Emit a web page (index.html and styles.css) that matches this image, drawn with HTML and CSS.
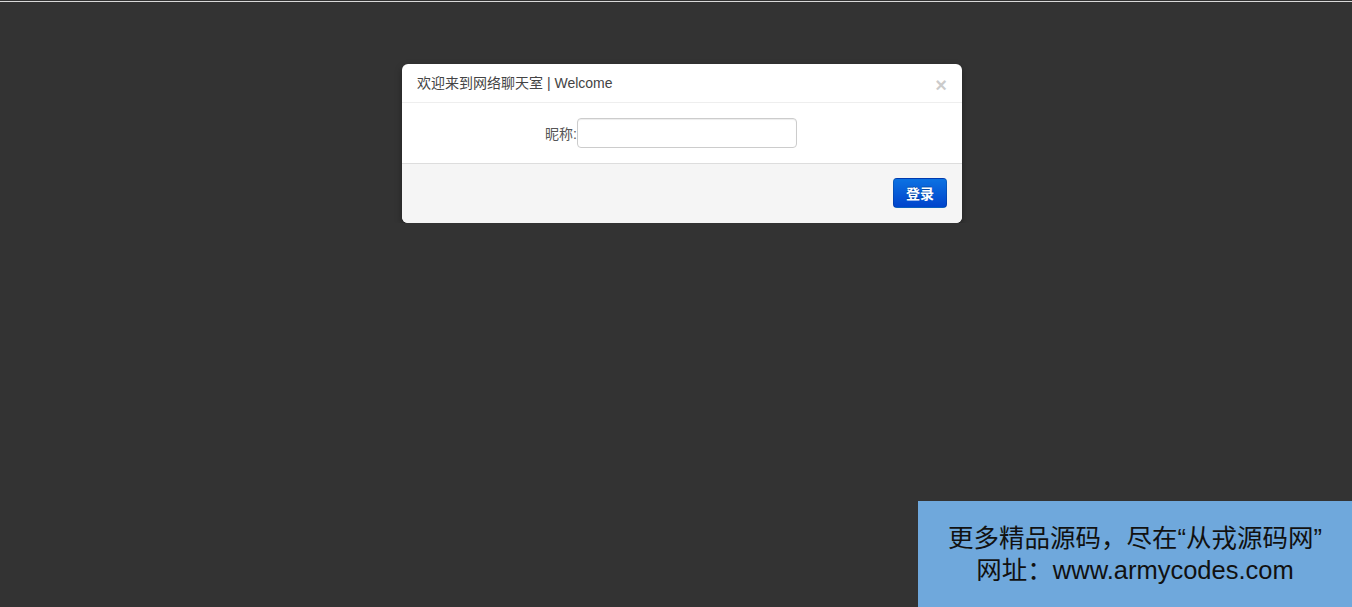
FILE: index.html
```html
<!DOCTYPE html>
<html lang="zh-CN">
  <head>
    <meta charset="UTF-8" />
    <meta name="viewport" content="width=device-width, initial-scale=1.0" />
    <link rel="stylesheet" href="styles.css">

    <title>网络聊天室</title>
  </head>
  <body>
    <div class="topline"></div>

    <div class="modal">
      <div class="modal-header">
        <span class="close">&times;</span>
        <h3>欢迎来到网络聊天室 | Welcome</h3>
      </div>
      <div class="modal-body">
        <label for="nick">昵称:</label><input id="nick" type="text" />
      </div>
      <div class="modal-footer">
        <button class="btn-primary">登录</button>
      </div>
    </div>

    <div class="promo">
      <p>更多精品源码，尽在“从戎源码网”</p>
      <p>网址：www.armycodes.com</p>
    </div>
  </body>
</html>
```

FILE: styles.css
```css
html {
  background: #333;
}

body {
  margin: 0;
  padding: 0;
  font-family: "Liberation Sans", "Noto Sans CJK SC", sans-serif;
  font-size: 14px;
  color: #333;
}

.topline {
  height: 1px;
  margin-top: 1px;
  background: #d9d9d9;
}

.modal {
  width: 560px;
  margin: 62px 0 0 402px;
  background: #fff;
  border-radius: 6px;
  box-shadow: 0 3px 7px rgba(0, 0, 0, 0.35);
  overflow: hidden;
}

.modal-header {
  padding: 9px 15px;
  border-bottom: 1px solid #eee;
}

.modal-header h3 {
  margin: 0;
  font-size: 14px;
  font-weight: normal;
  line-height: 20px;
  color: #444;
}

.close {
  float: right;
  margin-top: 2px;
  font-size: 20px;
  font-weight: bold;
  line-height: 20px;
  color: #000;
  opacity: 0.2;
}

.modal-body {
  display: flex;
  justify-content: center;
  align-items: center;
  height: 30px;
  padding: 15px 37px 15px 15px;
}

.modal-body label {
  color: #555;
}

.modal-body input {
  box-sizing: border-box;
  width: 220px;
  height: 30px;
  margin: 0;
  padding: 4px 6px;
  border: 1px solid #ccc;
  border-radius: 4px;
  box-shadow: inset 0 1px 1px rgba(0, 0, 0, 0.075);
}

.modal-footer {
  display: flex;
  justify-content: flex-end;
  padding: 14px 15px 15px;
  background: #f5f5f5;
  border-top: 1px solid #ddd;
}

.btn-primary {
  box-sizing: border-box;
  width: 54px;
  height: 30px;
  padding: 0;
  border: 1px solid rgba(0, 0, 0, 0.15);
  border-radius: 4px;
  background: linear-gradient(to bottom, #0c72e2, #0044cc);
  color: #fff;
  font-family: "Noto Sans CJK SC", sans-serif;
  font-size: 14px;
  font-weight: bold;
  text-shadow: 0 -1px 0 rgba(0, 0, 0, 0.25);
}

.promo {
  position: fixed;
  right: 0;
  bottom: 0;
  box-sizing: border-box;
  width: 434px;
  height: 106px;
  padding-top: 21px;
  background: #6fa8dc;
  color: #111;
  text-align: center;
  font-size: 25.5px;
  line-height: 32px;
}

.promo p {
  margin: 0;
}
```
